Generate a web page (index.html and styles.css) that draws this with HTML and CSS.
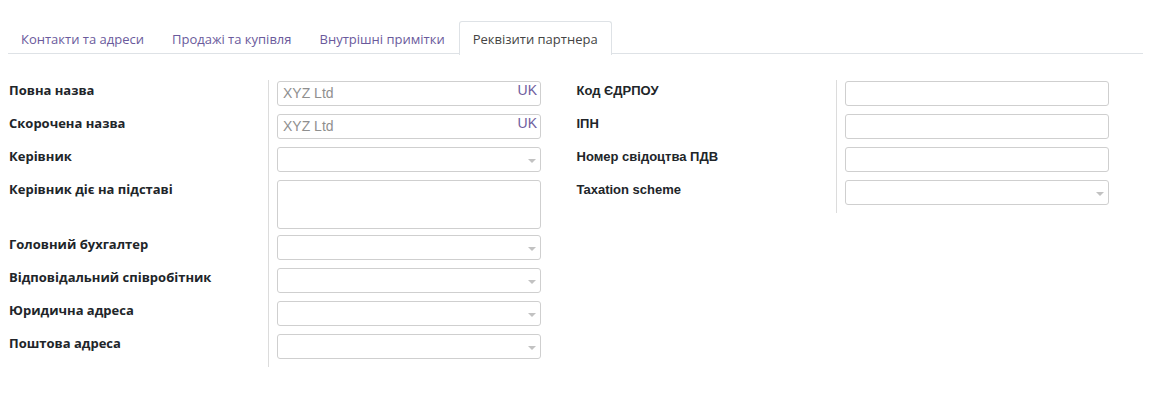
FILE: index.html
```html
<!DOCTYPE html>
<html>
<head>
<meta charset="utf-8">
<link rel="stylesheet" href="styles.css">
</head>
<body>
<div class="tabs">
  <div class="tab">Контакти та адреси</div>
  <div class="tab">Продажі та купівля</div>
  <div class="tab">Внутрішні примітки</div>
  <div class="tab active">Реквізити партнера</div>
</div>
<div class="groups">
  <div class="group">
    <div class="labels os">
      <div class="lbl">Повна назва</div>
      <div class="lbl">Скорочена назва</div>
      <div class="lbl">Керівник</div>
      <div class="lbl tall">Керівник діє на підставі</div>
      <div class="lbl">Головний бухгалтер</div>
      <div class="lbl">Відповідальний співробітник</div>
      <div class="lbl">Юридична адреса</div>
      <div class="lbl">Поштова адреса</div>
    </div>
    <div class="fields">
      <div class="inp"><span class="val">XYZ Ltd</span><span class="lang">UK</span></div>
      <div class="inp"><span class="val">XYZ Ltd</span><span class="lang">UK</span></div>
      <div class="inp sel"><span class="caret"></span></div>
      <div class="inp area"></div>
      <div class="inp sel"><span class="caret"></span></div>
      <div class="inp sel"><span class="caret"></span></div>
      <div class="inp sel"><span class="caret"></span></div>
      <div class="inp sel"><span class="caret"></span></div>
    </div>
  </div>
  <div class="group">
    <div class="labels ar">
      <div class="lbl">Код ЄДРПОУ</div>
      <div class="lbl">ІПН</div>
      <div class="lbl">Номер свідоцтва ПДВ</div>
      <div class="lbl">Taxation scheme</div>
    </div>
    <div class="fields">
      <div class="inp"></div>
      <div class="inp"></div>
      <div class="inp"></div>
      <div class="inp sel"><span class="caret"></span></div>
    </div>
  </div>
</div>
</body>
</html>
```
FILE: styles.css
```css
* { box-sizing: border-box; }
body {
  margin: 0;
  padding: 21px 13px 0 8px;
  background: #fff;
  font-family: "Open Sans", sans-serif;
  font-size: 13px;
  color: #212529;
}
.tabs {
  display: flex;
  border-bottom: 1px solid #dee2e6;
  height: 33px;
}
.tab {
  padding: 0 13px;
  height: 33px;
  line-height: 35px;
  color: #6a5a9c;
  border: 1px solid transparent;
  border-bottom: none;
  border-radius: 3px 3px 0 0;
}
.tab.active {
  color: #444;
  border-color: #dee2e6;
  background: #fff;
  margin-bottom: -1px;
  height: 34px;
}
.tab:nth-child(1) { padding-left: 12px; }
.groups {
  display: flex;
  align-items: flex-start;
  padding-top: 26px;
}
.group {
  width: 568px;
  display: flex;
  align-items: flex-start;
}
.labels {
  width: 260px;
  display: flex;
  flex-direction: column;
  gap: 8px;
  padding-top: 0;
}
.lbl {
  height: 25px;
  font-weight: bold;
  line-height: 20px;
  padding-left: 1px;
}
.lbl.tall { height: 49px; margin-bottom: -2px; }
.labels.ar { padding-top: 1px; }
.labels.ar .lbl {
  font-family: "Liberation Sans", Arial, sans-serif;
}
.fields {
  border-left: 1px solid #dcdcdc;
  padding: 1px 0 8px 8px;
  display: flex;
  flex-direction: column;
  gap: 8px;
}
.inp {
  width: 264px;
  height: 25px;
  border: 1px solid #cfcfcf;
  border-radius: 3px;
  position: relative;
  font-family: "Liberation Sans", Arial, sans-serif;
  font-size: 14px;
}
.inp.area { height: 49px; margin-bottom: -2px; }
.val {
  position: absolute;
  left: 5px;
  top: 3px;
  color: #8f8f8f;
}
.lang {
  position: absolute;
  right: 3px;
  top: 0px;
  color: #6f5e9e;
}
.caret {
  position: absolute;
  right: 4px;
  top: 11px;
  width: 0;
  height: 0;
  border-left: 4px solid transparent;
  border-right: 4px solid transparent;
  border-top: 4px solid #c2c2c2;
}
```
